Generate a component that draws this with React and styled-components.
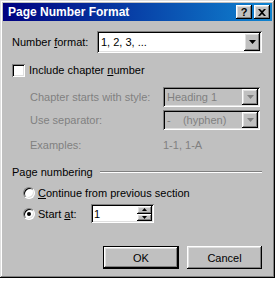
import styled, { createGlobalStyle } from 'styled-components';

const GlobalStyle = createGlobalStyle`
	body {
		margin: 0;
		background: #fff;
		font-family: "Liberation Sans", Arial, sans-serif;
		font-size: 11px;
		color: #000;
	}
`;

const raised = `
	box-shadow: inset -1px -1px #000, inset 1px 1px #fff, inset -2px -2px #808080, inset 2px 2px #dfdfdf;
`;

const sunken = `
	box-shadow: inset 1px 1px #808080, inset -1px -1px #fff, inset 2px 2px #000, inset -2px -2px #dfdfdf;
`;

const Window = styled.div`
	width: 275px;
	height: 278px;
	box-sizing: border-box;
	padding: 3px;
	background: #c0c0c0;
	box-shadow: inset -1px -1px #000, inset 1px 1px #dfdfdf, inset -2px -2px #808080, inset 2px 2px #fff;
	display: flex;
	flex-direction: column;
`;

const TitleBar = styled.div`
	height: 18px;
	display: flex;
	align-items: center;
	padding: 0 2px 0 5px;
	background: linear-gradient(90deg, #000080, #1084d0);
`;

const Title = styled.span`
	color: #fff;
	font-weight: bold;
	font-size: 12px;
`;

const CaptionButtons = styled.div`
	margin-left: auto;
	display: flex;
	gap: 2px;
`;

const CaptionButton = styled.div`
	width: 16px;
	height: 14px;
	background: #c0c0c0;
	${raised}
	display: flex;
	align-items: center;
	justify-content: center;
	font-weight: bold;
	font-size: 11px;
	line-height: 1;
`;

const Content = styled.div`
	padding: 0 10px 0 9px;
	display: flex;
	flex-direction: column;
`;

const Row = styled.div`
	display: flex;
	align-items: center;
	height: ${(p) => p.$h || 14}px;
	margin-top: ${(p) => p.$mt || 0}px;
	padding-left: ${(p) => p.$indent || 0}px;
	color: ${(p) => (p.$disabled ? '#808080' : '#000')};
`;

const Label = styled.span`
	width: ${(p) => (p.$w ? `${p.$w}px` : 'auto')};
	flex-shrink: 0;
	white-space: nowrap;
`;

const Combo = styled.div`
	width: ${(p) => (p.$w ? `${p.$w}px` : 'auto')};
	flex: ${(p) => (p.$w ? 'none' : '1')};
	height: ${(p) => p.$h}px;
	box-sizing: border-box;
	background: ${(p) => (p.$disabled ? '#c0c0c0' : '#fff')};
	color: ${(p) => (p.$disabled ? '#808080' : '#000')};
	${sunken}
	display: flex;
	align-items: center;
	padding: 2px 2px 2px 4px;
	white-space: pre;
`;

const DropButton = styled.div`
	margin-left: auto;
	width: 16px;
	height: 100%;
	background: #c0c0c0;
	${raised}
	display: flex;
	align-items: center;
	justify-content: center;
`;

const Check = styled.div`
	width: 13px;
	height: 13px;
	box-sizing: border-box;
	background: #fff;
	${sunken}
	margin-right: 4px;
`;

const Radio = styled.div`
	width: 12px;
	height: 12px;
	box-sizing: border-box;
	border-radius: 50%;
	background: #fff;
	border: 1px solid;
	border-color: #808080 #fff #fff #808080;
	box-shadow: inset 1px 1px #000, inset -1px -1px #dfdfdf;
	margin-right: 3px;
	display: flex;
	align-items: center;
	justify-content: center;
	&::after {
		content: '';
		display: ${(p) => (p.$checked ? 'block' : 'none')};
		width: 4px;
		height: 4px;
		border-radius: 50%;
		background: #000;
	}
`;

const GroupLine = styled.div`
	flex: 1;
	margin-left: 7px;
	border-top: 1px solid #808080;
	border-bottom: 1px solid #fff;
`;

const Spin = styled.div`
	width: 63px;
	height: 19px;
	box-sizing: border-box;
	background: #fff;
	${sunken}
	display: flex;
	align-items: center;
	padding: 2px 2px 2px 3px;
`;

const SpinButtons = styled.div`
	margin-left: auto;
	width: 15px;
	height: 100%;
	display: flex;
	flex-direction: column;
`;

const SpinHalf = styled.div`
	flex: 1;
	background: #c0c0c0;
	${raised}
	display: flex;
	align-items: center;
	justify-content: center;
`;

const ButtonRow = styled.div`
	display: flex;
	justify-content: flex-end;
	gap: 8px;
	margin-top: 23px;
`;

const Button = styled.div`
	width: ${(p) => p.$w}px;
	height: 23px;
	box-sizing: border-box;
	background: #c0c0c0;
	box-shadow: ${(p) =>
		p.$default
			? 'inset 0 0 0 1px #000, inset -2px -2px #000, inset 2px 2px #fff, inset -3px -3px #808080, inset 3px 3px #dfdfdf'
			: 'inset -1px -1px #000, inset 1px 1px #fff, inset -2px -2px #808080, inset 2px 2px #dfdfdf'};
	display: flex;
	align-items: center;
	justify-content: center;
`;

const Arrow = ({ up, disabled, w = 7 }) => (
	<svg width={w} height={Math.ceil(w / 2)} viewBox={`0 0 ${w} ${Math.ceil(w / 2)}`}>
		<polygon
			points={up ? `${w / 2},0 ${w},${Math.ceil(w / 2)} 0,${Math.ceil(w / 2)}` : `0,0 ${w},0 ${w / 2},${Math.ceil(w / 2)}`}
			fill={disabled ? '#808080' : '#000'}
		/>
	</svg>
);

export default function App() {
	return (
		<>
			<GlobalStyle />
			<Window>
				<TitleBar>
					<Title>Page Number Format</Title>
					<CaptionButtons>
						<CaptionButton>?</CaptionButton>
						<CaptionButton>
							<svg width="8" height="7" viewBox="0 0 8 7">
								<path d="M0 0h2l2 2 2-2h2L5 3.5 8 7H6L4 5 2 7H0l3-3.5z" fill="#000" />
							</svg>
						</CaptionButton>
					</CaptionButtons>
				</TitleBar>
				<Content>
					<Row $mt={10} $h={22}>
						<Label $w={85}>
							Number <u>f</u>ormat:
						</Label>
						<Combo $h={22}>
							1, 2, 3, ...
							<DropButton>
								<Arrow />
							</DropButton>
						</Combo>
					</Row>
					<Row $mt={10}>
						<Check />
						<Label>
							Include chapter <u>n</u>umber
						</Label>
					</Row>
					<Row $mt={10} $h={20} $indent={18} $disabled>
						<Label $w={133}>Chapter starts with style:</Label>
						<Combo $w={97} $h={20} $disabled>
							Heading 1
							<DropButton>
								<Arrow disabled />
							</DropButton>
						</Combo>
					</Row>
					<Row $mt={3} $h={20} $indent={18} $disabled>
						<Label $w={133}>Use separator:</Label>
						<Combo $w={97} $h={20} $disabled>
							{'-    (hyphen)'}
							<DropButton>
								<Arrow disabled />
							</DropButton>
						</Combo>
					</Row>
					<Row $mt={8} $indent={18} $disabled>
						<Label $w={133}>Examples:</Label>
						<Label>1-1, 1-A</Label>
					</Row>
					<Row $mt={13}>
						<Label>Page numbering</Label>
						<GroupLine />
					</Row>
					<Row $mt={7} $indent={11}>
						<Radio />
						<Label>
							<u>C</u>ontinue from previous section
						</Label>
					</Row>
					<Row $mt={4} $h={19} $indent={11}>
						<Radio $checked />
						<Label $w={53}>
							Start <u>a</u>t:
						</Label>
						<Spin>
							1
							<SpinButtons>
								<SpinHalf>
									<Arrow up w={5} />
								</SpinHalf>
								<SpinHalf>
									<Arrow w={5} />
								</SpinHalf>
							</SpinButtons>
						</Spin>
					</Row>
					<ButtonRow>
						<Button $w={76} $default>
							OK
						</Button>
						<Button $w={75}>Cancel</Button>
					</ButtonRow>
				</Content>
			</Window>
		</>
	);
}
